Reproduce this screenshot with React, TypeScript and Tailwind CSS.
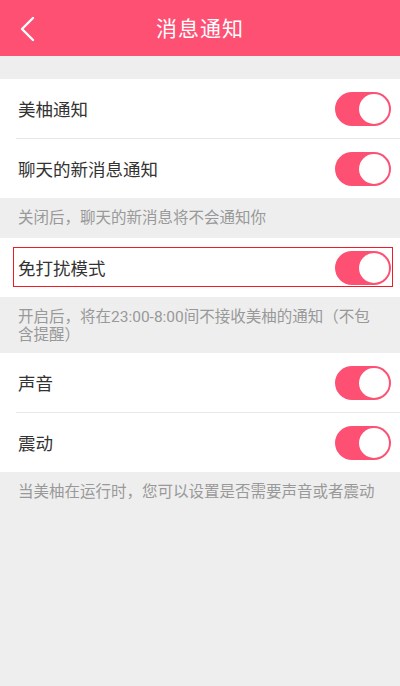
import React from "react";

const Toggle = () => (
  <div className="w-[56px] h-[34px] rounded-full bg-[#fe5073] flex items-center justify-end pr-[2px]">
    <div className="w-[30px] h-[30px] rounded-full bg-white" />
  </div>
);

const Row = ({ label }: { label: string }) => (
  <div className="h-[59px] flex items-center justify-between pl-[18px] pr-[9px] bg-white">
    <span className="text-[17.5px] text-[#333333] pt-[3px]">{label}</span>
    <Toggle />
  </div>
);

const Divider = () => (
  <div className="bg-white pl-[16px]">
    <div className="h-px bg-[#e8e8e8]" />
  </div>
);

export default function App() {
  return (
    <div
      className="w-[400px] h-[686px] bg-[#eeeeee] flex flex-col"
      style={{ fontFamily: 'Roboto, "Noto Sans CJK SC", "Noto Sans", sans-serif' }}
    >
      <div className="h-[56px] bg-[#fe5073] relative flex items-center justify-center shrink-0">
        <svg
          className="absolute left-[18px] top-[16px]"
          width="18"
          height="26"
          viewBox="0 0 18 26"
          fill="none"
        >
          <path d="M15 2 L4 13 L15 24" stroke="white" strokeWidth="2.4" strokeLinecap="round" strokeLinejoin="round" />
        </svg>
        <span className="text-white text-[21px] tracking-[1px] pt-[4px]">消息通知</span>
      </div>
      <div className="h-[23px] shrink-0" />
      <Row label="美柚通知" />
      <Divider />
      <Row label="聊天的新消息通知" />
      <div className="h-[40px] flex items-center pl-[18px] pt-[2px] text-[15.5px] text-[#999999]">
        关闭后，聊天的新消息将不会通知你
      </div>
      <div className="relative">
        <Row label="免打扰模式" />
        <div className="absolute left-[13px] right-[7px] top-[9px] bottom-[10px] border-[1.5px] border-[#ee1c25]" />
      </div>
      <div className="h-[56px] flex flex-col justify-center pl-[18px] pr-[10px] pt-[2px] text-[15.5px] leading-[18px] text-[#999999]">
        <span className="whitespace-nowrap">开启后，将在23:00-8:00间不接收美柚的通知（不包</span>
        <span>含提醒）</span>
      </div>
      <Row label="声音" />
      <Divider />
      <Row label="震动" />
      <div className="h-[40px] flex items-center pl-[18px] pt-[2px] text-[15.5px] text-[#999999]">
        当美柚在运行时，您可以设置是否需要声音或者震动
      </div>
    </div>
  );
}
